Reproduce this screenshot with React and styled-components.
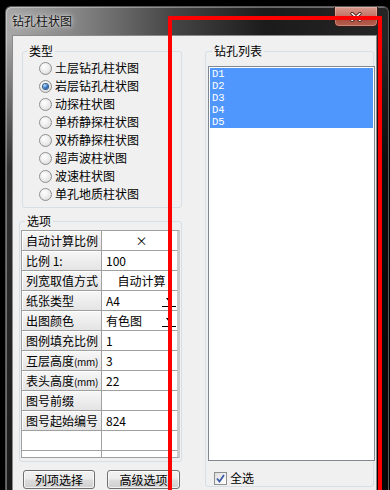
import styled, { createGlobalStyle } from 'styled-components';

const GlobalStyle = createGlobalStyle`
  html, body {
    margin: 0;
    padding: 0;
    background: #000;
  }
  body {
    font-family: "Noto Sans CJK SC", "Liberation Sans", sans-serif;
    font-size: 12px;
    color: #000;
  }
  #root {
    width: 390px;
    height: 490px;
    overflow: hidden;
  }
`;

const Stage = styled.div`
  position: relative;
  width: 390px;
  height: 490px;
  overflow: hidden;
  background: #000;
`;

const Window = styled.div`
  box-sizing: border-box;
  margin: 6px 0 0 5px;
  width: 384px;
  height: 484px;
  border: 1px solid #5a5a5a;
  border-bottom: none;
  border-radius: 6px 6px 0 0;
  padding: 0 11px 0 6px;
  display: flex;
  flex-direction: column;
  background:
    linear-gradient(to bottom, rgba(0, 0, 0, 0) 0, rgba(0, 0, 0, 0) 30px, rgba(0, 0, 0, 0.7) 160px, rgba(0, 0, 0, 0.85) 100%),
    linear-gradient(to right, #a8a8a8 0, #858585 70px, #444 170px, #1b1b1b 260px, #262626 100%);
  box-shadow: inset 1px 1px 0 rgba(255, 255, 255, 0.35);
`;

const TitleBar = styled.div`
  height: 28px;
  display: flex;
  align-items: flex-start;
`;

const TitleText = styled.div`
  line-height: 28px;
  font-size: 12px;
  color: #111;
  text-shadow: 0 0 6px rgba(255, 255, 255, 0.9), 0 0 2px rgba(255, 255, 255, 0.7);
`;

const CloseButton = styled.div`
  box-sizing: border-box;
  margin-left: auto;
  margin-right: -1px;
  width: 44px;
  height: 20px;
  border: 1px solid #3a1c16;
  border-top: none;
  border-radius: 0 0 5px 5px;
  background: linear-gradient(to bottom, #d79a8c 0, #c27566 45%, #a5493a 55%, #b8604f 100%);
  box-shadow: inset 0 0 0 1px rgba(255, 255, 255, 0.25);
  display: flex;
  align-items: center;
  justify-content: center;
`;

const Client = styled.div`
  flex: 1;
  min-height: 0;
  background: #f0f0f0;
  border: 1px solid #8a8a8a;
  border-bottom: none;
  display: flex;
  align-items: flex-start;
  gap: 23px;
  padding: 8px 2px 0 9px;
`;

const LeftCol = styled.div`
  width: 160px;
  display: flex;
  flex-direction: column;
`;

const Group = styled.fieldset`
  box-sizing: border-box;
  margin: ${(p) => p.$margin || '0'};
  width: ${(p) => p.$width}px;
  padding: ${(p) => p.$pad || '0'};
  border: 1px solid #d5dfe5;
  border-radius: 3px;
  min-width: 0;
`;

const Legend = styled.legend`
  margin-left: ${(p) => p.$offset}px;
  padding: 0 2px;
  font-size: 12px;
  line-height: 14px;
  color: #000;
`;

const RadioRow = styled.div`
  display: flex;
  align-items: center;
  gap: 3px;
  height: 18px;
  line-height: 18px;
`;

const RadioDot = styled.span`
  box-sizing: border-box;
  width: 13px;
  height: 13px;
  border-radius: 50%;
  border: 1px solid #8f8f8f;
  background: radial-gradient(circle at 40% 35%, #ffffff 0, #eaeaea 55%, #cfcfcf 100%);
  display: flex;
  align-items: center;
  justify-content: center;
  &::after {
    content: '';
    display: ${(p) => (p.$on ? 'block' : 'none')};
    width: 5px;
    height: 5px;
    border-radius: 50%;
    background: radial-gradient(circle at 35% 30%, #b9e2ff 0, #2d6fc4 55%, #0b3a7d 100%);
    box-shadow: 0 0 0 1px #3b5d86;
  }
`;

const Grid = styled.div`
  box-sizing: border-box;
  height: 228px;
  margin: 2px 0 0 1px;
  width: 159px;
  border: 1px solid #a0a0a0;
  border-right: 3px solid #cacaca;
  background: #fff;
  overflow: hidden;
`;

const Row = styled.div`
  box-sizing: border-box;
  display: grid;
  grid-template-columns: 80px 1fr;
  height: 20px;
  border-bottom: 1px solid #a0a0a0;
`;

const KeyCell = styled.div`
  box-sizing: border-box;
  border-right: 1px solid #a0a0a0;
  padding-left: 4px;
  line-height: 19px;
  white-space: nowrap;
  overflow: hidden;
  background: ${(p) => (p.$blank ? '#fff' : 'linear-gradient(to bottom, #f7f7f7 0, #e4e4e4 100%)')};
  box-shadow: ${(p) => (p.$blank ? 'none' : 'inset 1px 1px 0 #fff')};
`;

const Unit = styled.span`
  font-size: 10px;
  letter-spacing: -0.3px;
`;

const ValueCell = styled.div`
  position: relative;
  padding-left: 4px;
  line-height: 19px;
  white-space: nowrap;
  text-align: ${(p) => (p.$center ? 'center' : 'left')};
`;

const DropArrow = styled.svg`
  position: absolute;
  right: 0;
  top: 3px;
`;

const ButtonRow = styled.div`
  display: flex;
  gap: 12px;
  margin: 8px 0 0 1px;
`;

const Button = styled.div`
  box-sizing: border-box;
  width: ${(p) => p.$w}px;
  height: 19px;
  border: 1px solid #707070;
  border-radius: 3px;
  background: linear-gradient(to bottom, #f2f2f2 0, #ebebeb 48%, #dddddd 52%, #cfcfcf 100%);
  box-shadow: inset 0 0 0 1px rgba(255, 255, 255, 0.7);
  text-align: center;
  line-height: 17px;
  font-size: 12px;
`;

const ListBox = styled.div`
  box-sizing: border-box;
  margin: 8px 0 0 1px;
  width: 167px;
  height: 395px;
  border: 1px solid #828790;
  background: #fff;
  padding: 1px;
`;

const ListItem = styled.div`
  height: 12px;
  line-height: 12px;
  padding-left: 2px;
  font-family: "Liberation Mono", "DejaVu Sans Mono", monospace;
  font-size: 10.5px;
  color: ${(p) => (p.$sel ? '#fff' : '#000')};
  background: ${(p) => (p.$sel ? '#4f97fd' : 'transparent')};
`;

const CheckRow = styled.div`
  display: flex;
  align-items: center;
  gap: 3px;
  margin: 9px 0 0 7px;
  height: 16px;
  line-height: 16px;
`;

const CheckBox = styled.span`
  box-sizing: border-box;
  width: 13px;
  height: 13px;
  border: 1px solid #8e8f8f;
  background: linear-gradient(135deg, #dcdcdc 0, #f4f4f4 60%, #ffffff 100%);
  display: flex;
  align-items: center;
  justify-content: center;
`;

const Annotation = styled.div`
  position: absolute;
  left: 168px;
  top: 16px;
  width: 214px;
  height: 480px;
  box-sizing: border-box;
  border: 4px solid #ff0000;
  border-bottom: none;
  pointer-events: none;
`;

const types = [
  '土层钻孔柱状图',
  '岩层钻孔柱状图',
  '动探柱状图',
  '单桥静探柱状图',
  '双桥静探柱状图',
  '超声波柱状图',
  '波速柱状图',
  '单孔地质柱状图',
];

const options = [
  { key: '自动计算比例', value: '×', center: true },
  { key: '比例 1:', value: '100' },
  { key: '列宽取值方式', value: '自动计算', center: true },
  { key: '纸张类型', value: 'A4', drop: true },
  { key: '出图颜色', value: '有色图', drop: true },
  { key: '图例填充比例', value: '1' },
  { key: '互层高度', unit: '(mm)', value: '3' },
  { key: '表头高度', unit: '(mm)', value: '22' },
  { key: '图号前缀', value: '' },
  { key: '图号起始编号', value: '824' },
  { key: '', value: '', blank: true },
  { key: '', value: '', blank: true },
];

const holes = ['D1', 'D2', 'D3', 'D4', 'D5'];

const Arrow = () => (
  <DropArrow width="16" height="14" viewBox="0 0 16 14">
    <path d="M5 4 L11 4 L8 8 Z" fill="#000" />
    <rect x="1" y="12" width="14" height="1" fill="#000" />
  </DropArrow>
);

const App = () => {
  return (
    <Stage>
      <GlobalStyle />
      <Window>
        <TitleBar>
          <TitleText>钻孔柱状图</TitleText>
          <CloseButton>
            <svg width="12" height="10" viewBox="0 0 12 10">
              <path d="M2 1.5 L10 8.5 M10 1.5 L2 8.5" stroke="#4a2018" strokeWidth="3.2" strokeLinecap="round" />
              <path d="M2 1.5 L10 8.5 M10 1.5 L2 8.5" stroke="#fff" strokeWidth="1.6" strokeLinecap="round" />
            </svg>
          </CloseButton>
        </TitleBar>
        <Client>
          <LeftCol>
            <Group $width={160} $pad="1px 0 4px 16px">
              <Legend $offset={-12}>类型</Legend>
              {types.map((t, i) => (
                <RadioRow key={t}>
                  <RadioDot $on={i === 1} />
                  {t}
                </RadioRow>
              ))}
            </Group>
            <Group $width={163} $margin="6px 0 0 -3px" $pad="0 0 3px 0">
              <Legend $offset={5}>选项</Legend>
              <Grid>
                {options.map((o, i) => (
                  <Row key={i}>
                    <KeyCell $blank={o.blank}>
                      {o.key}
                      {o.unit && <Unit>{o.unit}</Unit>}
                    </KeyCell>
                    <ValueCell $center={o.center}>
                      {o.value}
                      {o.drop && <Arrow />}
                    </ValueCell>
                  </Row>
                ))}
              </Grid>
            </Group>
            <ButtonRow>
              <Button $w={72}>列项选择</Button>
              <Button $w={73}>高级选项</Button>
            </ButtonRow>
          </LeftCol>
          <Group $width={169} $pad="0 0 0 1px">
            <Legend $offset={5}>钻孔列表</Legend>
            <ListBox>
              {holes.map((h) => (
                <ListItem key={h} $sel>
                  {h}
                </ListItem>
              ))}
            </ListBox>
            <CheckRow>
              <CheckBox>
                <svg width="11" height="11" viewBox="0 0 11 11">
                  <path d="M2 5.5 L4.5 8.5 L9 2" fill="none" stroke="#3d5aa6" strokeWidth="1.8" />
                </svg>
              </CheckBox>
              全选
            </CheckRow>
          </Group>
        </Client>
      </Window>
      <Annotation />
    </Stage>
  );
};

export default App;
